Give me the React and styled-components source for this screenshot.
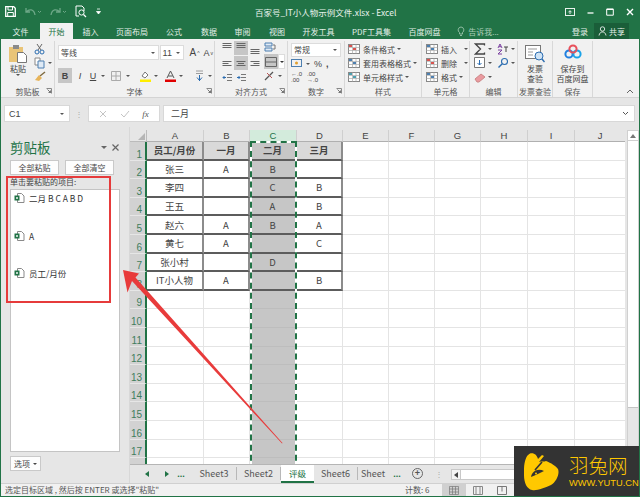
import React from 'react'
import styled, { createGlobalStyle } from 'styled-components'

const GlobalStyle = createGlobalStyle`
  html, body { margin: 0; padding: 0; background: #e6e6e6; overflow: hidden; }
  * { box-sizing: border-box; }
  body { font-family: "Noto Sans CJK SC", "Liberation Sans", sans-serif; color: #444; font-size: 8px; }
`

const GREEN = '#217346'
const CJK = '"Noto Sans CJK SC", "Liberation Sans", sans-serif'

const Window = styled.div`
  position: relative;
  width: 640px;
  height: 497px;
  overflow: hidden;
  display: flex;
  flex-direction: column;
  border-left: 1px solid ${GREEN};
  border-right: 1px solid ${GREEN};
  border-bottom: 1px solid ${GREEN};
  background: #e6e6e6;
`

/* title bar */
const TitleBar = styled.div`
  height: 23px;
  flex: none;
  background: ${GREEN};
  color: #e8f2ec;
  display: flex;
  align-items: center;
`
const QuickTools = styled.div`
  width: 254px;
  padding-left: 4px;
  display: flex;
  align-items: center;
  gap: 9px;
`
const DocTitle = styled.div`
  font-size: 8.5px;
  white-space: nowrap;
`
const WinButtons = styled.div`
  margin-left: auto;
  padding-right: 5px;
  display: flex;
  align-items: center;
  gap: 12px;
`

/* tabs */
const TabRow = styled.div`
  height: 16px;
  flex: none;
  background: ${GREEN};
  display: flex;
  align-items: stretch;
`
const Tab = styled.div`
  width: ${p => p.$w}px;
  flex: none;
  display: flex;
  align-items: center;
  justify-content: center;
  font-size: 8px;
  white-space: nowrap;
  color: ${p => (p.$active ? GREEN : '#e3efe8')};
  background: ${p => (p.$active ? '#f1f1f1' : 'transparent')};
`
const TellMe = styled(Tab)`
  gap: 3px;
  color: #a9cdb8;
`
const LoginTab = styled(Tab)`
  justify-content: flex-end;
  padding-right: 3px;
`
const ShareTab = styled(Tab)`
  margin-left: 3px;
  background: #1a5e39;
  gap: 2px;
`

/* ribbon */
const Ribbon = styled.div`
  height: 59px;
  flex: none;
  background: #f1f1f1;
  border-bottom: 1px solid #d4d4d4;
  display: flex;
  position: relative;
`
const Group = styled.div`
  width: ${p => p.$w}px;
  flex: none;
  display: flex;
  flex-direction: column;
  margin: 2px 0 0;
  border-right: 1px solid #d8d8d8;
`
const GroupBody = styled.div`
  flex: 1;
  min-height: 0;
  display: flex;
  padding: ${p => p.$pad || '0 3px'};
  gap: ${p => p.$gap || 0}px;
`
const GroupFoot = styled.div`
  height: 12px;
  display: grid;
  grid-template-columns: ${p => (p.$plain ? '1fr' : '10px 1fr 10px')};
  align-items: center;
  text-align: center;
  font-size: 8px;
  color: #555;
  white-space: nowrap;
`
const Launcher = styled.svg`
  width: 6px;
  height: 6px;
  justify-self: center;
`
const Stack = styled.div`
  display: flex;
  flex-direction: column;
  justify-content: space-between;
  padding: ${p => p.$pad || '2px 0 2px'};
  width: ${p => (p.$w ? `${p.$w}px` : 'auto')};
`
const Line = styled.div`
  display: flex;
  align-items: center;
  gap: ${p => p.$gap ?? 2}px;
  height: ${p => p.$h || 15}px;
  font-size: 8px;
  white-space: nowrap;
  color: #444;
`
const BigButton = styled.div`
  width: ${p => p.$w}px;
  display: flex;
  flex-direction: column;
  align-items: center;
  padding-top: 3px;
  font-size: 8px;
  line-height: 10px;
  text-align: center;
  color: #444;
`
const BigLabel = styled.div`
  margin-top: ${p => p.$mt ?? 3}px;
  white-space: nowrap;
`
const Caret = styled.span`
  display: inline-block;
  flex: none;
  width: 0;
  height: 0;
  margin-left: ${p => p.$ml || 0}px;
  margin-right: ${p => p.$mr || 0}px;
  border-left: ${p => p.$s || 2}px solid transparent;
  border-right: ${p => p.$s || 2}px solid transparent;
  border-top: ${p => (p.$s ? p.$s : 2.5)}px solid ${p => p.$c || '#555'};
`
const FieldBox = styled.div`
  width: ${p => p.$w}px;
  height: 15px;
  background: #fff;
  border: 1px solid #dcdcdc;
  display: flex;
  align-items: center;
  justify-content: space-between;
  padding: ${p => (p.$w < 10 ? '1px' : '0 3px 0 2px')};
  font-size: 8px;
  color: #444;
`
const Pressed = styled.div`
  width: ${p => p.$w || 14}px;
  height: ${p => p.$h || 15}px;
  flex: none;
  display: flex;
  align-items: center;
  justify-content: center;
  background: ${p => (p.$on ? '#c6c6c6' : 'transparent')};
`
const FontGlyph = styled.span`
  font-family: "Liberation Sans", sans-serif;
  font-size: ${p => p.$size || 9}px;
  line-height: ${p => (p.$tight ? '6px' : 'normal')};
  margin-left: ${p => p.$ml || 0}px;
  font-weight: ${p => (p.$bold ? 700 : 400)};
  font-style: ${p => (p.$italic ? 'italic' : 'normal')};
  text-decoration: ${p => (p.$under ? 'underline' : 'none')};
  color: #444;
`
const Collapse = styled.svg`
  position: absolute;
  right: 5px;
  bottom: 3px;
  width: 8px;
  height: 5px;
`

/* formula bar */
const FormulaRow = styled.div`
  height: 29px;
  flex: none;
  padding: 7px 4px 5px 3px;
  display: flex;
  align-items: stretch;
`
const NameBox = styled.div`
  width: 66px;
  background: #fff;
  border: 1px solid #d8d8d8;
  display: flex;
  align-items: center;
  justify-content: space-between;
  padding: 0 5px 0 4px;
  font-size: 9px;
  font-family: "Liberation Sans", sans-serif;
`
const Dots = styled.div`
  width: ${p => p.$w || 18}px;
  flex: none;
  display: flex;
  align-items: center;
  justify-content: center;
  color: #aaa;
  font-size: 8px;
  line-height: 3px;
`
const FnBox = styled.div`
  width: 72px;
  background: #fff;
  border: 1px solid #d8d8d8;
  display: flex;
  align-items: center;
  justify-content: space-around;
  padding: 0 4px;
  color: #bbb;
`
const FnLabel = styled.span`
  font-family: "Liberation Serif", serif;
  font-style: italic;
  font-size: 9px;
  color: #555;
`
const FormulaInput = styled.div`
  flex: 1;
  margin-left: 3px;
  background: #fff;
  border: 1px solid #d8d8d8;
  display: flex;
  align-items: center;
  justify-content: space-between;
  padding: 0 5px 0 7px;
  font-size: 9px;
`

/* main split */
const Main = styled.div`
  flex: 1;
  min-height: 0;
  display: flex;
`
const Panel = styled.div`
  width: 121px;
  flex: none;
  display: flex;
  flex-direction: column;
  padding: 0 2px 0 9px;
`
const PanelHead = styled.div`
  height: 33px;
  padding-top: 7px;
  display: flex;
  align-items: center;
  justify-content: space-between;
  color: ${GREEN};
  font-size: 13.5px;
`
const PanelTools = styled.div`
  display: flex;
  align-items: center;
  gap: 5px;
  padding-right: 1px;
`
const PanelButtons = styled.div`
  display: flex;
  gap: 6px;
`
const PanelButton = styled.div`
  width: ${p => p.$w || 49}px;
  height: 15px;
  display: flex;
  align-items: center;
  justify-content: center;
  gap: 3px;
  background: #fdfdfd;
  border: 1px solid #c9c9c9;
  font-size: 8px;
  color: #444;
`
const PanelHint = styled.div`
  margin-top: 1px;
  height: 11px;
  line-height: 11px;
  font-size: 8px;
  color: #444;
`
const ClipList = styled.div`
  flex: 1;
  margin-top: 2px;
  width: 110px;
  background: #fff;
  border: 1px solid #c4c4c4;
  padding: 2px 0 0 3px;
`
const ClipItem = styled.div`
  height: 37.5px;
  display: flex;
  align-items: flex-start;
  gap: 4px;
  font-size: 8.5px;
  line-height: 12px;
  color: #333;
`
const PanelFoot = styled.div`
  height: 31px;
  padding-top: 4px;
`

const Sheet = styled.div`
  flex: 1;
  min-width: 0;
  display: flex;
  flex-direction: column;
  padding-top: 3px;
  border-left: 1px solid #d8d8d8;
  margin-left: 7px;
`
const SheetBody = styled.div`
  flex: 1;
  min-height: 0;
  display: flex;
`
const GridWrap = styled.div`
  position: relative;
  width: 496px;
  overflow: hidden;
  background: #fff;
`
const Grid = styled.div`
  display: grid;
  grid-template-columns: 17px 57px 46px 47px 46px 46px 46px 46px 47px 47px 51px;
  grid-template-rows: 12px repeat(18, 18.6px);
`
const Corner = styled.div`
  background: #e6e6e6;
  border-right: 1px solid #bbb;
  border-bottom: 1px solid #bbb;
  display: flex;
  align-items: flex-end;
  justify-content: flex-end;
  padding: 0 1px 1px 0;
`
const ColHead = styled.div`
  display: flex;
  align-items: center;
  justify-content: center;
  font-family: "Liberation Sans", sans-serif;
  font-size: 9.5px;
  color: ${p => (p.$sel ? GREEN : '#444')};
  background: ${p => (p.$sel ? '#d3ebdc' : '#e6e6e6')};
  border-right: 1px solid #cfcfcf;
  border-bottom: 1px solid ${p => (p.$sel ? GREEN : '#b0b0b0')};
`
const RowHead = styled.div`
  display: flex;
  align-items: flex-end;
  justify-content: flex-end;
  padding-right: 3px;
  font-family: "Liberation Sans", sans-serif;
  font-size: 10px;
  line-height: 10px;
  color: #3f7d5d;
  background: #d2d2d2;
  border-right: 2px solid ${GREEN};
  border-bottom: 1px solid #e6e6e6;
`
const Cell = styled.div`
  display: flex;
  align-items: center;
  justify-content: center;
  white-space: nowrap;
  font-size: 9.5px;
  font-weight: ${p => (p.$head ? 700 : 400)};
  color: #444;
  background: ${p => (p.$sel ? '#c6c6c6' : p.$head ? '#d9d9d9' : '#fff')};
  border-right: ${p => (p.$table ? '2px solid #8c8c8c' : p.$sel ? 'none' : '1px solid #e4e4e4')};
  border-bottom: ${p => (p.$table ? '2px solid #5c5c5c' : p.$sel ? '1px solid #bdbdbd' : '1px solid #e4e4e4')};
`
const Ants = styled.div`
  position: absolute;
  left: 120px;
  top: 11px;
  width: 47px;
  height: 340px;
  border: 2px solid #fff;
  &::before {
    content: '';
    position: absolute;
    inset: -2px;
    border: 2px dashed ${GREEN};
  }
`
const VScroll = styled.div`
  width: 12px;
  margin-left: 2px;
  display: flex;
  flex-direction: column;
  border: 1px solid #d0d0d0;
  background: #e6e6e6;
`
const ScrollBtn = styled.div`
  height: 10px;
  flex: none;
  background: #fff;
  display: flex;
  align-items: center;
  justify-content: center;
  border-bottom: 1px solid #d0d0d0;
`
const ScrollThumb = styled.div`
  height: 267px;
  background: #fff;
  border-bottom: 1px solid #c4c4c4;
`

const TabsBar = styled.div`
  height: 19px;
  flex: none;
  display: flex;
  align-items: stretch;
  border-top: 1px solid #b5b5b5;
  background: #e6e6e6;
  font-family: "Liberation Sans", sans-serif;
  font-size: 9px;
`
const NavButton = styled.div`
  width: ${p => p.$w || 18}px;
  flex: none;
  display: flex;
  align-items: center;
  justify-content: center;
  color: ${GREEN};
  font-weight: 700;
`
const SheetTab = styled.div`
  width: ${p => p.$w}px;
  flex: none;
  display: flex;
  align-items: center;
  justify-content: center;
  white-space: nowrap;
  margin: ${p => (p.$active ? '0' : '2px 0 3px')};
  color: ${p => (p.$active ? GREEN : '#555')};
  background: ${p => (p.$active ? '#fff' : 'transparent')};
  border-right: ${p => (p.$active || p.$last ? 'none' : '1px solid #b8b8b8')};
  border-bottom: ${p => (p.$active ? `2px solid ${GREEN}` : 'none')};
  font-family: ${CJK};
  font-size: ${p => (p.$active ? 8.5 : 9)}px;
`
const AddSheet = styled.div`
  width: 11px;
  height: 11px;
  margin: 3px 13px 0 6px;
  flex: none;
  border: 1px solid #666;
  border-radius: 50%;
  display: flex;
  align-items: center;
  justify-content: center;
  font-size: 9px;
  line-height: 9px;
  color: #555;
  font-weight: 700;
`
const HScroll = styled.div`
  flex: 1;
  margin: 4px 0 3px 9px;
  display: flex;
  background: #fff;
  border: 1px solid #c8c8c8;
`
const HArrow = styled.div`
  width: 9px;
  background: #f4f4f4;
  border-right: 1px solid #c8c8c8;
  display: flex;
  align-items: center;
  justify-content: center;
`

const StatusBar = styled.div`
  height: 13px;
  flex: none;
  display: flex;
  align-items: stretch;
  background: #f1f1f1;
  border-top: 1px solid #d0d0d0;
  padding-left: 4px;
  font-size: 8px;
  line-height: 12px;
  color: #555;
`
const StatusCount = styled.div`
  margin-left: auto;
  width: 37px;
`
const ViewButton = styled.div`
  width: 24px;
  display: flex;
  align-items: center;
  justify-content: center;
  background: ${p => (p.$on ? '#d0d0d0' : 'transparent')};
`
const StatusRest = styled.div`
  width: 125px;
`

/* overlays */
const RedBox = styled.div`
  position: absolute;
  left: 5px;
  top: 176px;
  width: 105px;
  height: 127px;
  border: 2px solid #e63b3b;
  pointer-events: none;
`
const ArrowSvg = styled.svg`
  position: absolute;
  left: 119px;
  top: 267px;
  pointer-events: none;
`
const Watermark = styled.div`
  position: absolute;
  right: -1px;
  bottom: -1px;
  width: 126px;
  height: 51px;
  background: #333;
  display: flex;
  align-items: center;
  padding-left: 10px;
  gap: 9px;
`
const MarkText = styled.div`
  display: flex;
  flex-direction: column;
  color: #ffc800;
`
const MarkName = styled.div`
  font-size: 19.5px;
  line-height: 20px;
  height: 20px;
  font-weight: 300;
  white-space: nowrap;
`
const MarkUrl = styled.div`
  margin-top: 3px;
  font-family: "Liberation Sans", sans-serif;
  font-size: 9.3px;
  line-height: 10px;
  white-space: nowrap;
`

/* little drawings */
const I = ({ w = 12, h = 12, children }) => (
  <svg width={w} height={h} viewBox={`0 0 ${w} ${h}`} fill="none">{children}</svg>
)
const Launch = () => (
  <Launcher viewBox="0 0 6 6" fill="none">
    <path d="M.5.5h5v5" stroke="#888" />
    <path d="M1.5 1.5l3 3M4.5 2.5v2h-2" stroke="#555" strokeWidth=".8" />
  </Launcher>
)
const LinesIcon = ({ kind, on }) => {
  const rows = { top: [1, 3, 5], mid: [4, 6, 8], bot: [7, 9, 11] }
  const ys = rows[kind.split('-')[0]]
  const al = kind.split('-')[1]
  return (
    <Pressed $w={14} $h={14} $on={on}>
      <I w={10} h={12}>
        {ys.map((y, i) => {
          const len = al === 'full' ? 9 : i === 1 ? 6 : 9
          const x = al === 'right' ? 9.5 - len : al === 'center' ? 5 - len / 2 : .5
          return <path key={y} d={`M${x} ${y + .5}h${len}`} stroke="#666" />
        })}
      </I>
    </Pressed>
  )
}
const ExcelDoc = () => (
  <I w={11} h={12}>
    <path d="M3.5 1.5h4l2.5 2.5v6.5h-6.5z" fill="#fff" stroke="#8a8a8a" />
    <rect x=".5" y="3.5" width="5" height="5" fill="#217346" />
    <path d="M2 5l2 2M4 5l-2 2" stroke="#fff" strokeWidth=".7" />
  </I>
)
const PasteIcon = () => (
  <I w={20} h={20}>
    <rect x="1" y="3" width="14" height="15" fill="#e9c477" />
    <rect x="5" y="1" width="6" height="4" fill="#8a8a8a" />
    <path d="M9.5 8.5h6l3 3v7h-9z" fill="#fff" stroke="#777" />
  </I>
)
const MiniTable = ({ accent = '#888' }) => (
  <I w={13} h={11}>
    <rect x=".5" y=".5" width="11" height="9" fill="#fff" stroke="#888" />
    <path d="M.5 3.5h11M.5 6.5h11M4.5.5v9M8 .5v9" stroke="#aaa" strokeWidth=".7" />
    <rect x="1" y="1" width="3" height="2" fill={accent} />
    <rect x="5" y="4" width="3" height="2" fill={accent} />
  </I>
)

const tabs = [
  ['文件', 39], ['开始', 33, true], ['插入', 35], ['页面布局', 48], ['公式', 36], ['数据', 34], ['审阅', 33], ['视图', 36],
  ['开发工具', 47], ['PDF工具集', 59], ['百度网盘', 47],
]
const colNames = ['A', 'B', 'C', 'D', 'E', 'F', 'G', 'H', 'I', 'J']
const tableRows = [
  ['员工/月份', '一月', '二月', '三月'],
  ['张三', 'A', 'B', ''],
  ['李四', '', 'C', 'B'],
  ['王五', '', 'A', 'B'],
  ['赵六', 'A', 'B', 'A'],
  ['黄七', 'A', '', 'C'],
  ['张小村', '', 'D', ''],
  ['IT小人物', 'A', '', 'B'],
]
const clips = ['二月 B C A B D', 'A', '员工/月份']

const cellsFor = r => colNames.map((c, i) => {
  const inTable = r < 8 && i < 4
  const value = inTable ? tableRows[r][i] : ''
  return (
    <Cell key={c + r} $table={inTable} $head={r === 0 && i < 4} $sel={i === 2}>
      {value}
    </Cell>
  )
})

export default function App() {
  return (
    <>
      <GlobalStyle />
      <Window>
        <TitleBar>
          <QuickTools>
            <I w={11} h={11}>
              <path d="M.7.7h8l1.6 1.6v8H.7z" stroke="#fff" strokeWidth="1.3" />
              <path d="M3 1v3h4.5V1M2.7 10V6.5h5.6V10" stroke="#fff" />
            </I>
            <I w={16} h={10}>
              <path d="M1 1v4h4M1.5 5C4 1.5 9 2 10 8" stroke="#6ea888" strokeWidth="1.3" />
              <path d="M13 4l1.5 1.5L16 4" stroke="#6ea888" />
            </I>
            <I w={16} h={10}>
              <path d="M10 1v4H6M9.5 5C7 1.5 2 2 1 8" stroke="#6ea888" strokeWidth="1.3" />
              <path d="M13 4l1.5 1.5L16 4" stroke="#6ea888" />
            </I>
            <I w={12} h={13}>
              <path d="M1 1h6l2 2v3M1 1v10h3" stroke="#fff" />
              <circle cx="6.5" cy="7.5" r="2.6" stroke="#fff" />
              <path d="M8.5 9.5l2.5 2.5" stroke="#fff" strokeWidth="1.3" />
            </I>
            <I w={5} h={8}>
              <path d="M1 1h3M.5 3.5h4L2.5 6z" stroke="#fff" strokeWidth=".8" fill="#fff" />
            </I>
          </QuickTools>
          <DocTitle>百家号_IT小人物示例文件.xlsx - Excel</DocTitle>
          <WinButtons>
            <I w={10} h={8}>
              <rect x=".5" y=".5" width="9" height="7" stroke="#e8f2ec" />
              <path d="M5 6V3M3.5 4.3L5 2.6l1.5 1.7" stroke="#e8f2ec" />
            </I>
            <I w={7} h={8}><path d="M.5 5h6" stroke="#fff" strokeWidth="1.3" /></I>
            <I w={8} h={8}><path d="M.7 1.2h6.6v6H.7z" stroke="#fff" /><path d="M.7 1.3h6.6" stroke="#fff" strokeWidth="1.4" /></I>
            <I w={8} h={8}><path d="M1 1l6 6M7 1L1 7" stroke="#fff" strokeWidth="1.4" /></I>
          </WinButtons>
        </TitleBar>

        <TabRow>
          {tabs.map(([t, w, on]) => <Tab key={t} $w={w} $active={on}>{t}</Tab>)}
          <TellMe $w={60}>
            <I w={8} h={11}>
              <path d="M4 1a3 3 0 0 0-1.5 5.5V8h3V6.5A3 3 0 0 0 4 1zM3 9.5h2" stroke="#a9cdb8" strokeWidth=".8" />
            </I>
            告诉我...
          </TellMe>
          <LoginTab $w={83}>登录</LoginTab>
          <ShareTab $w={35}>
            <I w={9} h={10}>
              <circle cx="4.5" cy="3" r="2.2" stroke="#fff" strokeWidth=".8" />
              <path d="M1 9.5C1.5 6.8 3 6 4.5 6S7.5 6.8 8 9.5" stroke="#fff" strokeWidth=".8" />
            </I>
            共享
          </ShareTab>
        </TabRow>

        <Ribbon>
          <Group $w={54}>
            <GroupBody $pad="0 0 0 6px" $gap={5}>
              <BigButton $w={22}>
                <PasteIcon />
                <BigLabel $mt={0}>粘贴</BigLabel>
                <Caret />
              </BigButton>
              <Stack $pad="1px 0 2px">
                <Line><I w={11} h={12}><path d="M3 1l4 6M8 1L4 7" stroke="#666" /><circle cx="3" cy="9" r="2" stroke="#2b6cb0" /><circle cx="8" cy="9" r="2" stroke="#2b6cb0" /></I></Line>
                <Line $gap={3}><I w={11} h={12}><path d="M1 1h5v7H1z" fill="#fff" stroke="#888" /><path d="M4 4h6v7H4z" fill="#dfeaf5" stroke="#4d7fb0" /></I><Caret /></Line>
                <Line><I w={12} h={11}><path d="M6 5l5-4" stroke="#7f6a3f" strokeWidth="1.4" /><path d="M1 9l4-5 3 3-3 3z" fill="#e7b45a" /></I></Line>
              </Stack>
            </GroupBody>
            <GroupFoot><span /><span>剪贴板</span><Launch /></GroupFoot>
          </Group>

          <Group $w={160}>
            <GroupBody $pad="3px 2px 0 3px">
              <Stack $pad="1px 0 2px" $w={155}>
                <Line $gap={1}>
                  <FieldBox $w={101}>等线<Caret /></FieldBox>
                  <FieldBox $w={25}><FontGlyph>11</FontGlyph><Caret /></FieldBox>
                  <FontGlyph $size={10} $ml={4}>A</FontGlyph>
                  <FontGlyph $size={5}>^</FontGlyph>
                  <FontGlyph $size={9} $ml={3}>A</FontGlyph>
                  <FontGlyph $size={5}>v</FontGlyph>
                </Line>
                <Line $gap={3}>
                  <Pressed $on><FontGlyph $bold>B</FontGlyph></Pressed>
                  <Pressed $w={10}><FontGlyph $italic>I</FontGlyph></Pressed>
                  <Pressed $w={10}><FontGlyph $under>U</FontGlyph></Pressed>
                  <Caret />
                  <Pressed $w={15}>
                    <I w={10} h={10}><path d="M.5.5h9v9h-9zM5 .5v9M.5 5h9" stroke="#aaa" /></I>
                  </Pressed>
                  <Caret $mr={7} />
                  <I w={11} h={12}>
                    <path d="M2 6l3-4 3 3-3 3z" fill="#fff" stroke="#777" />
                    <rect y="9.5" width="11" height="2.5" fill="#ffee00" />
                  </I>
                  <Caret $mr={4} />
                  <I w={11} h={12}>
                    <path d="M2 8l3.5-7L9 8M3.3 6h4.4" stroke="#555" />
                    <rect y="9.5" width="11" height="2.5" fill="#e00000" />
                  </I>
                  <Caret $mr={8} />
                  <I w={11} h={13}>
                    <path d="M2 2h7M2 4.5h7" stroke="#888" strokeWidth=".8" />
                    <path d="M5.5 6v6M3 8.5l2.5 3 2.5-3" stroke="#2b6cb0" />
                  </I>
                  <Caret />
                </Line>
              </Stack>
            </GroupBody>
            <GroupFoot><span /><span>字体</span><Launch /></GroupFoot>
          </Group>

          <Group $w={73}>
            <GroupBody $pad="0 1px 0 5px">
              <Stack $pad="0" $w={44}>
                <Line $gap={0} $h={14}><LinesIcon kind="top-full" /><LinesIcon kind="top-full" on /><LinesIcon kind="bot-full" /></Line>
                <Line $gap={0} $h={15}><LinesIcon kind="mid-left" /><LinesIcon kind="mid-center" on /><LinesIcon kind="mid-right" /></Line>
                <Line $gap={0} $h={15}>
                  <Pressed $w={14}><I w={11} h={10}><path d="M5 1.5h5M5 4.5h5M5 7.5h5" stroke="#777" /><path d="M4 4.5H1M2.5 3L1 4.5 2.5 6" stroke="#2b6cb0" /></I></Pressed>
                  <Pressed $w={14}><I w={11} h={10}><path d="M5 1.5h5M5 4.5h5M5 7.5h5" stroke="#777" /><path d="M1 4.5h3M2.5 3L4 4.5 2.5 6" stroke="#2b6cb0" /></I></Pressed>
                </Line>
              </Stack>
              <Stack $pad="0 0 3px" $w={22}>
                <Line $h={14}><I w={12} h={12}><path d="M1 1h7v3H1zM1 6h7v3H1z" fill="#dfeaf5" stroke="#4d7fb0" /><path d="M9 3h2v4H9" stroke="#777" /></I></Line>
                <Line $h={15} $gap={0}>
                  <Pressed $on $w={14}><I w={12} h={10}><path d="M.5.5h11v9H.5zM.5 5h11" stroke="#666" /></I></Pressed>
                  <FieldBox $w={7}><Caret $c="#333" /></FieldBox>
                </Line>
                <Line $h={13} $gap={3}><I w={11} h={11}><path d="M1 10L9 2" stroke="#555" strokeWidth="1.3" /><path d="M3 3l5 5" stroke="#b55" /></I><Caret /></Line>
              </Stack>
            </GroupBody>
            <GroupFoot><span /><span>对齐方式</span><Launch /></GroupFoot>
          </Group>

          <Group $w={57}>
            <GroupBody $pad="0 0 0 3px">
              <Stack $pad="2px 0 1px" $w={53}>
                <FieldBox $w={50}>常规<Caret /></FieldBox>
                <Line $gap={4}>
                  <I w={11} h={10}><rect x=".5" y=".5" width="10" height="7" stroke="#4d7fb0" /><circle cx="5.5" cy="4" r="1.5" fill="#e0a030" /></I>
                  <Caret />
                  <FontGlyph>%</FontGlyph>
                  <FontGlyph $bold>,</FontGlyph>
                </Line>
                <Line $gap={5}>
                  <FontGlyph $size={6} $tight>←.0<br />.00</FontGlyph>
                  <FontGlyph $size={6} $tight>.00<br />→.0</FontGlyph>
                </Line>
              </Stack>
            </GroupBody>
            <GroupFoot><span /><span>数字</span><Launch /></GroupFoot>
          </Group>

          <Group $w={77}>
            <GroupBody $pad="0 0 0 3px">
              <Stack $pad="1px 0 1px">
                <Line><MiniTable accent="#d9534f" />条件格式<Caret /></Line>
                <Line><MiniTable accent="#4d7fb0" />套用表格格式<Caret /></Line>
                <Line><MiniTable accent="#4d9fb0" />单元格样式<Caret /></Line>
              </Stack>
            </GroupBody>
            <GroupFoot><span /><span>样式</span><span /></GroupFoot>
          </Group>

          <Group $w={48}>
            <GroupBody $pad="0 0 0 4px">
              <Stack $pad="1px 0 1px">
                <Line><MiniTable accent="#4d7fb0" />插入<Caret $ml={5} /></Line>
                <Line><MiniTable accent="#d9534f" />删除<Caret $ml={5} /></Line>
                <Line><MiniTable accent="#4d7fb0" />格式<Caret /></Line>
              </Stack>
            </GroupBody>
            <GroupFoot><span /><span>单元格</span><span /></GroupFoot>
          </Group>

          <Group $w={48}>
            <GroupBody $pad="0 0 0 4px">
              <Stack $pad="1px 0 1px">
                <Line $gap={2}>
                  <I w={12} h={12}><path d="M10.5 2.5V1h-9l5 5-5 5h9V9.5" stroke="#444" strokeWidth="1.3" /></I>
                  <Caret $mr={3} />
                  <I w={12} h={12}><path d="M1 5l2-4 2 4M2 3.7h2M1 7h4L1 11h4" stroke="#7a3fa0" /><path d="M7 4h4M9 4v5" stroke="#444" /></I>
                  <Caret />
                </Line>
                <Line $gap={2}>
                  <I w={12} h={12}><path d="M.5.5h10v10H.5z" fill="#fff" stroke="#777" /><path d="M5.5 3v5M3.5 6l2 2 2-2" stroke="#2b6cb0" /></I>
                  <Caret $mr={3} />
                  <I w={12} h={12}><circle cx="7.5" cy="4.5" r="3" stroke="#2b6cb0" strokeWidth="1.1" /><path d="M5 7L1.5 10.5" stroke="#2b6cb0" strokeWidth="1.5" /></I>
                  <Caret />
                </Line>
                <Line><I w={12} h={11}><path d="M1 7l6-5 4 3-6 5H3z" fill="#ea9aa0" stroke="#c88" /></I><Caret /></Line>
              </Stack>
            </GroupBody>
            <GroupFoot><span /><span>编辑</span><span /></GroupFoot>
          </Group>

          <Group $w={35}>
            <GroupBody $pad="0">
              <BigButton $w={35}>
                <I w={20} h={19}>
                  <rect x=".5" y="1.5" width="15" height="13" fill="#fff" stroke="#777" />
                  <path d="M3 5h9M3 8h5M3 11h5" stroke="#999" />
                  <circle cx="14" cy="12" r="4" fill="#cfe3f5" stroke="#2b6cb0" />
                  <path d="M17 15l2.5 3" stroke="#2b6cb0" strokeWidth="1.4" />
                </I>
                <BigLabel $mt={1}>发票<br />查验</BigLabel>
              </BigButton>
            </GroupBody>
            <GroupFoot $plain><span>发票查验</span></GroupFoot>
          </Group>

          <Group $w={40}>
            <GroupBody $pad="0">
              <BigButton $w={40}>
                <I w={18} h={16}>
                  <circle cx="5" cy="10" r="3.6" stroke="#1f7fe0" strokeWidth="2" />
                  <circle cx="13" cy="10" r="3.6" stroke="#1aa3e8" strokeWidth="2" />
                  <circle cx="9" cy="5" r="3.6" stroke="#e8505b" strokeWidth="2" />
                </I>
                <BigLabel $mt={4}>保存到<br />百度网盘</BigLabel>
              </BigButton>
            </GroupBody>
            <GroupFoot $plain><span>保存</span></GroupFoot>
          </Group>
          <Collapse viewBox="0 0 8 5" fill="none"><path d="M1 4l3-3 3 3" stroke="#666" /></Collapse>
        </Ribbon>

        <FormulaRow>
          <NameBox>C1<Caret /></NameBox>
          <Dots>⋮</Dots>
          <FnBox>
            <I w={8} h={8}><path d="M1 1l6 6M7 1L1 7" stroke="#c4c4c4" /></I>
            <I w={10} h={8}><path d="M1 4l3 3 5-6" stroke="#c4c4c4" /></I>
            <FnLabel>fx</FnLabel>
          </FnBox>
          <FormulaInput>二月<I w={7} h={5}><path d="M1 1l2.5 2.5L6 1" stroke="#555" /></I></FormulaInput>
        </FormulaRow>

        <Main>
          <Panel>
            <PanelHead>
              <span>剪贴板</span>
              <PanelTools>
                <Caret $c="#666" $s={3} />
                <I w={7} h={7}><path d="M.5.5l6 6M6.5.5l-6 6" stroke="#666" strokeWidth="1.2" /></I>
              </PanelTools>
            </PanelHead>
            <PanelButtons>
              <PanelButton>全部粘贴</PanelButton>
              <PanelButton>全部清空</PanelButton>
            </PanelButtons>
            <PanelHint>单击要粘贴的项目:</PanelHint>
            <ClipList>
              {clips.map(c => (
                <ClipItem key={c}><ExcelDoc />{c}</ClipItem>
              ))}
            </ClipList>
            <PanelFoot>
              <PanelButton $w={31}>选项<Caret $c="#444" /></PanelButton>
            </PanelFoot>
          </Panel>

          <Sheet>
            <SheetBody>
              <GridWrap>
                <Grid>
                  <Corner><I w={7} h={7}><path d="M7 0v7H0z" fill="#b5b5b5" /></I></Corner>
                  {colNames.map(c => <ColHead key={c} $sel={c === 'C'}>{c}</ColHead>)}
                  {Array.from({ length: 18 }, (_, r) => (
                    <React.Fragment key={r}>
                      <RowHead>{r < 17 ? r + 1 : ''}</RowHead>
                      {cellsFor(r)}
                    </React.Fragment>
                  ))}
                </Grid>
                <Ants />
              </GridWrap>
              <VScroll>
                <ScrollBtn><I w={6} h={4}><path d="M3 0l3 4H0z" fill="#777" /></I></ScrollBtn>
                <ScrollThumb />
              </VScroll>
            </SheetBody>
            <TabsBar>
              <NavButton $w={34}><I w={4} h={6}><path d="M4 0v6L0 3z" fill={GREEN} /></I></NavButton>
              <NavButton $w={6}><I w={4} h={6}><path d="M0 0v6l4-3z" fill={GREEN} /></I></NavButton>
              <NavButton $w={22}>...</NavButton>
              <SheetTab $w={45}>Sheet3</SheetTab>
              <SheetTab $w={44}>Sheet2</SheetTab>
              <SheetTab $w={33} $active>评级</SheetTab>
              <SheetTab $w={44}>Sheet6</SheetTab>
              <SheetTab $w={30} $last>Sheet</SheetTab>
              <NavButton $w={18}>...</NavButton>
              <AddSheet>+</AddSheet>
              <Dots $w={6}>⋮</Dots>
              <HScroll>
                <HArrow><I w={4} h={6}><path d="M4 0v6L0 3z" fill="#444" /></I></HArrow>
              </HScroll>
            </TabsBar>
          </Sheet>
        </Main>

        <StatusBar>
          选定目标区域 , 然后按 ENTER 或选择"粘贴"
          <StatusCount>计数: 6</StatusCount>
          <ViewButton $on><I w={10} h={9}><path d="M.5.5h9v8h-9zM.5 3h9M.5 6h9M3.5.5v8M6.5.5v8" stroke="#777" strokeWidth=".7" /></I></ViewButton>
          <ViewButton><I w={10} h={9}><path d="M.5.5h9v8h-9zM3 .5v8M7 .5v8" stroke="#888" /></I></ViewButton>
          <ViewButton><I w={10} h={9}><path d="M.5.5h9v8h-9M.5.5v8M5 .5v5" stroke="#777" /></I></ViewButton>
          <StatusRest />
        </StatusBar>

        <RedBox />
        <ArrowSvg width="170" height="180" viewBox="0 0 170 180">
          <path d="M3 3L19 6.5L15.5 10.5L162.5 176L162 176.6L12 14L7.5 25.5z" fill="#e83b3b" />
        </ArrowSvg>
        <Watermark>
          <I w={36} h={38}>
            <path d="M6 .5C10-.5 13 2 14 6L18 2L20 3L15 9C18 8 20 9 22 8C27 10 32 13 34 16C36 21 32 29 27 32C20 35 13 38 8 37C3 36 0 30 0 22C-.5 12 1 3 6 .5z" fill="#ffc800" />
            <path d="M18 9L11 17" stroke="#333" strokeWidth="1.6" />
            <path d="M7 24C8 18 14 15 20 18C16 20 12 22 7 24z" fill="#333" />
            <circle cx="12" cy="20.5" r="1" fill="#ffc800" />
          </I>
          <MarkText>
            <MarkName>羽兔网</MarkName>
            <MarkUrl>WWW.YUTU.CN</MarkUrl>
          </MarkText>
        </Watermark>
      </Window>
    </>
  )
}
